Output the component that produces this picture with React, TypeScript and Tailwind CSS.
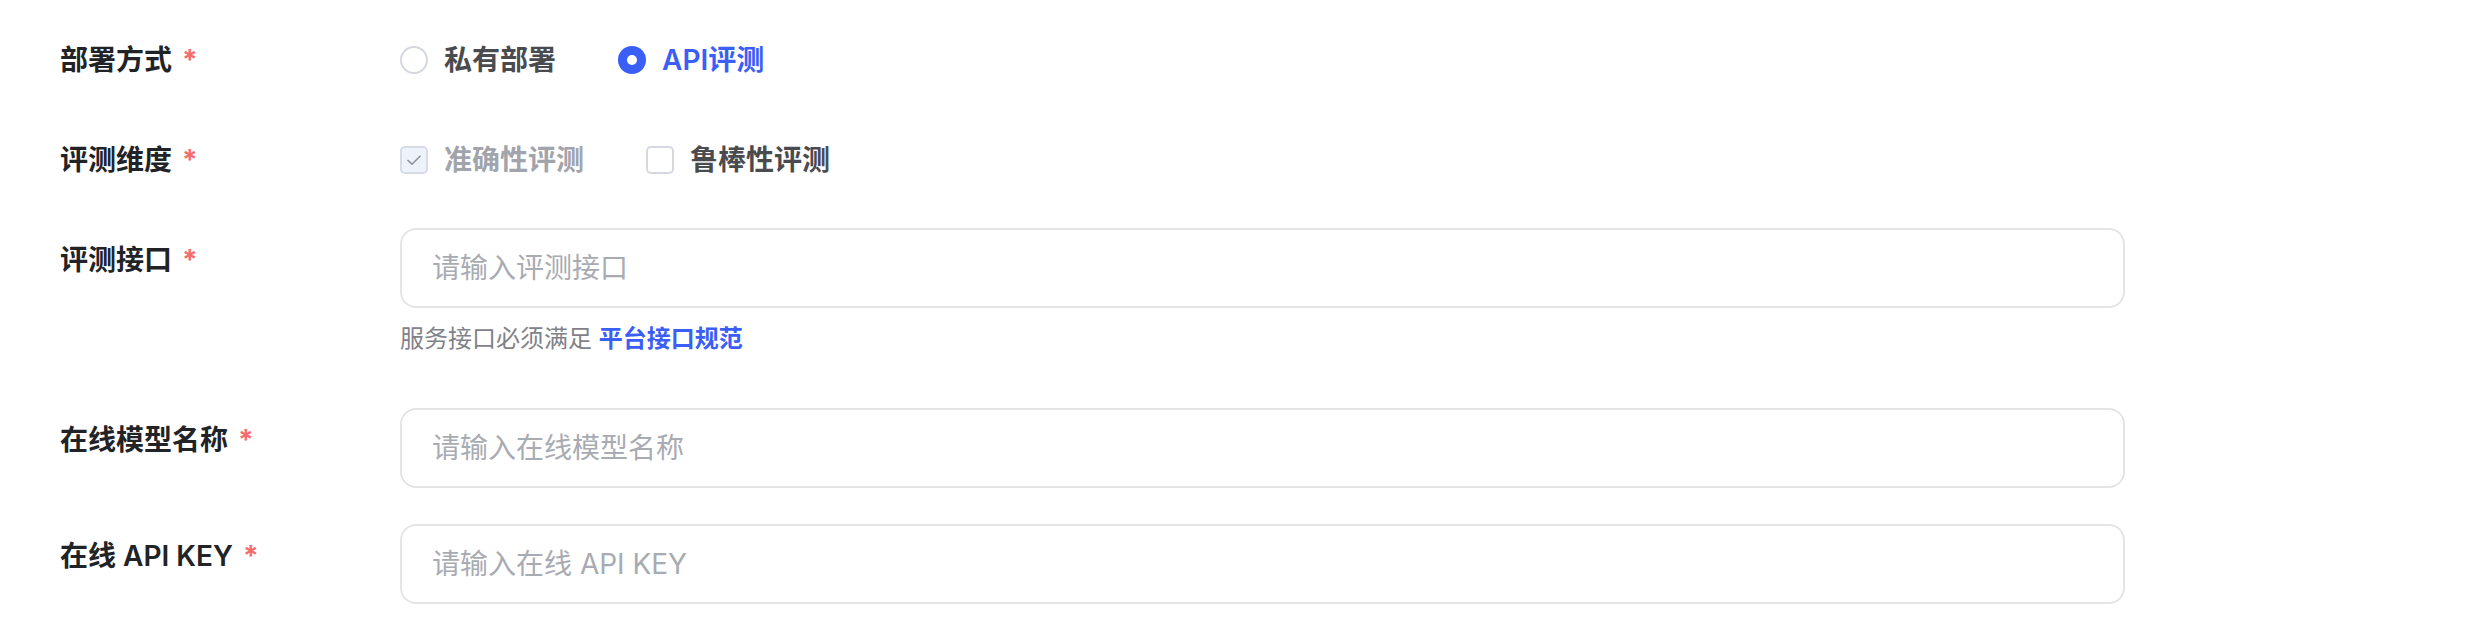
import React, { useState } from "react";

const FONT = "font-['Inter','Noto_Sans_CJK_SC',sans-serif]";

function FormItem({
  label,
  children,
  className = "",
}: {
  label: string;
  children: React.ReactNode;
  className?: string;
}) {
  return (
    <div className={`flex items-start ${className}`}>
      <div className="w-[340px] shrink-0 h-16 leading-[64px] text-[28px] font-semibold text-[#222326] whitespace-nowrap">
        {label}
        <span className="ml-[10px] font-bold text-[#f56c6c]">*</span>
      </div>
      <div className="flex-1">{children}</div>
    </div>
  );
}

function Radio({
  label,
  checked,
  onClick,
  className = "",
}: {
  label: string;
  checked: boolean;
  onClick: () => void;
  className?: string;
}) {
  return (
    <button onClick={onClick} className={`flex items-center h-16 ${className}`}>
      {checked ? (
        <span className="w-[28px] h-[28px] rounded-full bg-[#3b5ef6] flex items-center justify-center">
          <span className="w-[10px] h-[10px] rounded-full bg-white" />
        </span>
      ) : (
        <span className="w-[28px] h-[28px] rounded-full border-2 border-[#d5d8e0] bg-white" />
      )}
      <span
        className={`ml-4 text-[28px] font-semibold ${
          checked ? "text-[#3b5ef6]" : "text-[#4a4b4f]"
        }`}
      >
        {label}
      </span>
    </button>
  );
}

function Checkbox({
  label,
  checked,
  disabled,
  onClick,
  className = "",
}: {
  label: string;
  checked: boolean;
  disabled?: boolean;
  onClick?: () => void;
  className?: string;
}) {
  return (
    <button onClick={onClick} disabled={disabled} className={`flex items-center h-16 ${className}`}>
      {disabled ? (
        <span className="w-[28px] h-[28px] rounded-[5px] border-2 border-[#d6dbe6] bg-[#eef2fb] flex items-center justify-center">
          {checked && (
            <svg width="16" height="12" viewBox="0 0 16 12" fill="none">
              <path d="M1.5 6 L6 10.2 L14.5 1.8" stroke="#8d9099" strokeWidth="1.6" />
            </svg>
          )}
        </span>
      ) : (
        <span
          className={`w-[28px] h-[28px] rounded-[5px] border-2 flex items-center justify-center ${
            checked ? "bg-[#3b5ef6] border-[#3b5ef6]" : "bg-white border-[#d5d8e0]"
          }`}
        >
          {checked && (
            <svg width="16" height="12" viewBox="0 0 16 12" fill="none">
              <path d="M1.5 6 L6 10.2 L14.5 1.8" stroke="#fff" strokeWidth="2" />
            </svg>
          )}
        </span>
      )}
      <span
        className={`ml-4 text-[28px] font-semibold ${
          disabled ? "text-[#a2a4ab]" : "text-[#4a4b4f]"
        }`}
      >
        {label}
      </span>
    </button>
  );
}

function TextInput({ placeholder }: { placeholder: string }) {
  return (
    <input
      placeholder={placeholder}
      className="block w-[1725px] h-[80px] rounded-[16px] border-2 border-[#e4e5e7] bg-white px-[30px] text-[28px] text-[#222326] placeholder:text-[#a8abb2] outline-none"
    />
  );
}

export default function App() {
  const [deploy, setDeploy] = useState("api");
  const [robust, setRobust] = useState(false);

  return (
    <div className={`min-h-[632px] w-full bg-white pl-[60px] pt-[28px] ${FONT}`}>
      <FormItem label="部署方式" className="mb-9">
        <div className="flex">
          <Radio label="私有部署" checked={deploy === "private"} onClick={() => setDeploy("private")} className="mr-[62px]" />
          <Radio label="API评测" checked={deploy === "api"} onClick={() => setDeploy("api")} />
        </div>
      </FormItem>

      <FormItem label="评测维度" className="mb-9">
        <div className="flex">
          <Checkbox label="准确性评测" checked disabled className="mr-[62px]" />
          <Checkbox label="鲁棒性评测" checked={robust} onClick={() => setRobust(!robust)} />
        </div>
      </FormItem>

      <FormItem label="评测接口" className="mb-[51px]">
        <TextInput placeholder="请输入评测接口" />
        <div className="mt-[13px] h-9 leading-9 text-[24px] text-[#7f8289]">
          服务接口必须满足 <a className="font-semibold text-[#3b5ef6]">平台接口规范</a>
        </div>
      </FormItem>

      <FormItem label="在线模型名称" className="mb-9">
        <TextInput placeholder="请输入在线模型名称" />
      </FormItem>

      <FormItem label="在线 API KEY">
        <TextInput placeholder="请输入在线 API KEY" />
      </FormItem>
    </div>
  );
}
